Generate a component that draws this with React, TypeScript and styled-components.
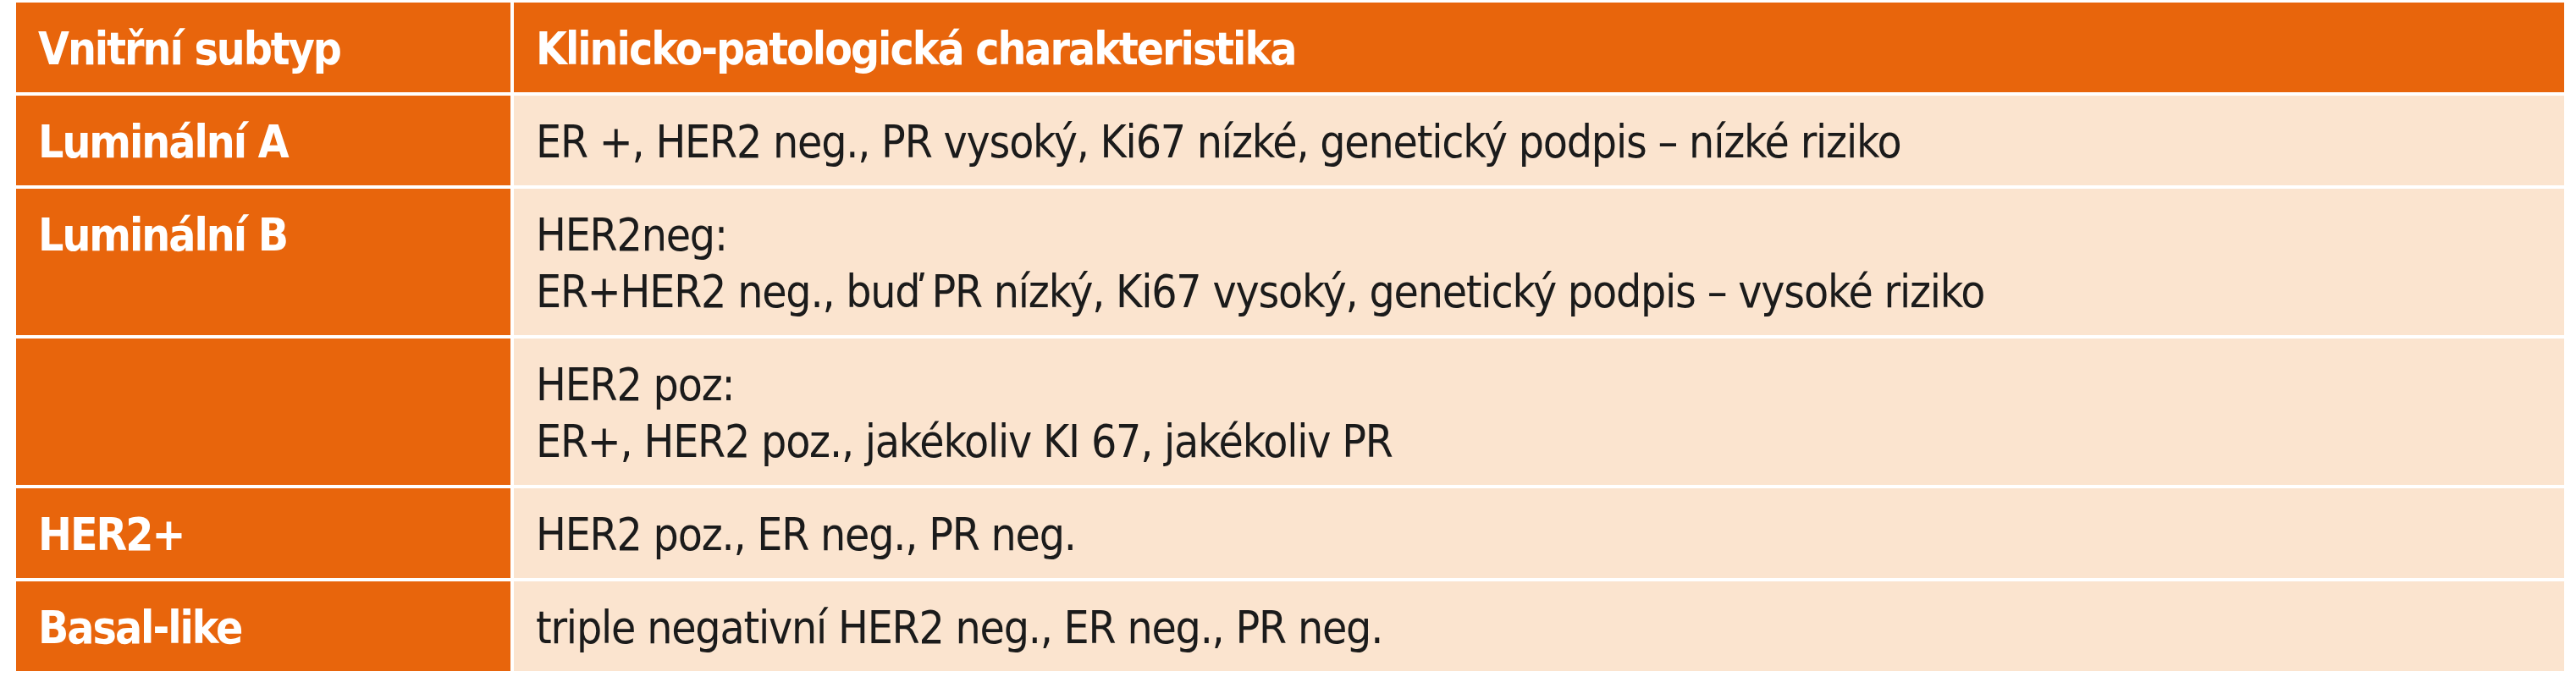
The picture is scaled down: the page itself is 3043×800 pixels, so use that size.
import React from 'react';
import styled, { createGlobalStyle } from 'styled-components';

const GlobalStyle = createGlobalStyle`
  html, body {
    margin: 0;
    padding: 0;
    background: #ffffff;
  }
`;

const rows = [
  { subtype: 'Luminální A', lines: ['ER +, HER2 neg., PR vysoký, Ki67 nízké, genetický podpis – nízké riziko'] },
  { subtype: 'Luminální B', lines: ['HER2neg:', 'ER+HER2 neg., buď PR nízký, Ki67 vysoký, genetický podpis – vysoké riziko'] },
  { subtype: '', lines: ['HER2 poz:', 'ER+, HER2 poz., jakékoliv KI 67, jakékoliv PR'] },
  { subtype: 'HER2+', lines: ['HER2 poz., ER neg., PR neg.'] },
  { subtype: 'Basal-like', lines: ['triple negativní HER2 neg., ER neg., PR neg.'] },
];

export default function App() {
  return (
    <>
      <GlobalStyle />
      <Page>
        <Table>
          <OrangeCell>Vnitřní subtyp</OrangeCell>
          <OrangeCell>Klinicko-patologická charakteristika</OrangeCell>
          {rows.map((row, i) => (
            <React.Fragment key={i}>
              <OrangeCell>{row.subtype}</OrangeCell>
              <PeachCell>
                {row.lines.map((line, j) => (
                  <Line key={j}>{line}</Line>
                ))}
              </PeachCell>
            </React.Fragment>
          ))}
        </Table>
      </Page>
    </>
  );
}

const Page = styled.div`
  padding: 3px 0 0 19px;
`;

const Table = styled.div`
  display: grid;
  grid-template-columns: 584px 2422px;
  gap: 4px;
  font-family: 'DejaVu Sans Condensed', 'DejaVu Sans', sans-serif;
  font-size: 53px;
  line-height: 67px;
`;

const Cell = styled.div`
  padding: 21px 26px 18px;
  min-height: 67px;
`;

const OrangeCell = styled(Cell)`
  background: #e8650c;
  color: #ffffff;
  font-weight: 700;
  letter-spacing: -2px;
`;

const PeachCell = styled(Cell)`
  background: #fbe4cf;
  color: #1b1b1b;
  letter-spacing: -1.2px;
`;

const Line = styled.div``;
